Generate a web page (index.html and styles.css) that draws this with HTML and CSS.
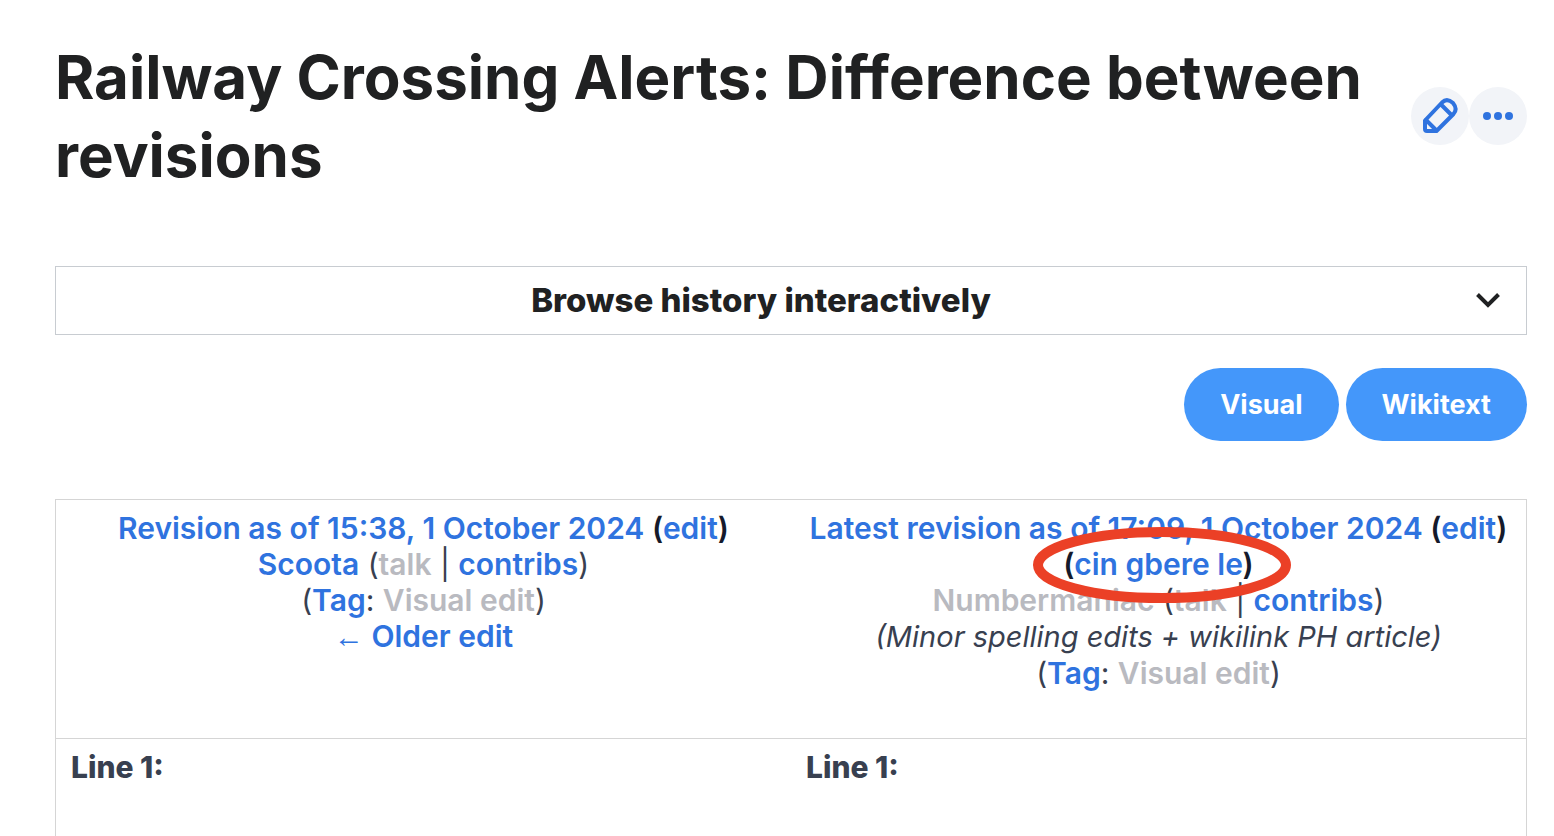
FILE: index.html
```html
<!DOCTYPE html>
<html lang="en">
<head>
<meta charset="utf-8">
<meta name="viewport" content="width=device-width, initial-scale=1">
<title>Railway Crossing Alerts: Difference between revisions</title>
<link rel="stylesheet" href="styles.css">
</head>
<body>
<main class="page">
  <header class="page-header">
    <h1 class="title">Railway Crossing Alerts: Difference between revisions</h1>
    <div class="actions">
      <button class="round" type="button" aria-label="Edit">
        <svg width="36" height="36" viewBox="0 0 36 36" fill="none" stroke="currentColor" stroke-width="4" stroke-linejoin="round" stroke-linecap="round" aria-hidden="true">
          <path d="M3 22.500 20 4.500Q25 -.5 31 5Q36 11 31.500 16L14.500 33H5Q3 33 3 31Z"/>
          <path d="M19 6.500 29.500 17M4 22 14 32"/>
        </svg>
      </button>
      <button class="round" type="button" aria-label="More">
        <svg width="32" height="10" viewBox="0 0 32 10" fill="currentColor" aria-hidden="true">
          <circle cx="5" cy="5" r="4"/><circle cx="16" cy="5" r="4"/><circle cx="27" cy="5" r="4"/>
        </svg>
      </button>
    </div>
  </header>

  <button class="history" type="button" aria-expanded="false">
    <span class="history-label">Browse history interactively</span>
    <svg width="24" height="16" viewBox="0 0 24 16" fill="none" stroke="currentColor" stroke-width="4" aria-hidden="true"><path d="M1.500 1.500 12 12 22.500 1.500"/></svg>
  </button>

  <div class="modes">
    <button class="mode" type="button">Visual</button>
    <button class="mode" type="button">Wikitext</button>
  </div>

  <table class="diff">
    <tbody>
      <tr class="revisions">
        <td>
          <div class="strong"><a href="#old">Revision as of 15:38, 1 October 2024</a> (<a href="#edit-old">edit</a>)</div>
          <div><a href="#scoota">Scoota</a> (<a class="missing" href="#talk-old">talk</a> | <a href="#contribs-old">contribs</a>)</div>
          <div>(<a href="#tag-old">Tag</a>: <span class="missing">Visual edit</span>)</div>
          <div><a href="#older"><span class="arrow">←</span> Older edit</a></div>
        </td>
        <td>
          <div class="strong"><a href="#latest">Latest revision as of 17:09, 1 October 2024</a> (<a href="#edit-latest">edit</a>)</div>
          <div class="strong"><span class="marked">(<a href="#undo">cin gbere le</a>)<svg class="ring" width="270" height="78" viewBox="0 0 270 78" fill="none" aria-hidden="true"><ellipse cx="138" cy="40" rx="124" ry="33" stroke="#eb4026" stroke-width="10"/></svg></span></div>
          <div><a class="missing" href="#numbermaniac">Numbermaniac</a> (<a class="missing" href="#talk-latest">talk</a> | <a href="#contribs-latest">contribs</a>)</div>
          <div><em class="summary">(Minor spelling edits + wikilink PH article)</em></div>
          <div>(<a href="#tag-latest">Tag</a>: <span class="missing">Visual edit</span>)</div>
        </td>
      </tr>
      <tr class="lines">
        <td>Line 1:</td>
        <td>Line 1:</td>
      </tr>
    </tbody>
  </table>
</main>
</body>
</html>
```
FILE: styles.css
```css
* { box-sizing: border-box; }
body {
  margin: 0;
  background: #fff;
  color: #384050;
  font: 400 30px/36px Inter, "Open Sans", sans-serif;
}
button { font: inherit; border: 0; cursor: pointer; }
a { color: #2f73df; font-weight: 600; text-decoration: none; }
.page { padding: 38px 27px 0 55px; }

.page-header {
  display: flex;
  align-items: center;
  justify-content: space-between;
  margin-bottom: 72px;
}
.title {
  margin: 0;
  color: #202122;
  font-size: 60px;
  font-weight: 700;
  line-height: 78px;
}
.actions { display: flex; flex: none; }
.round {
  display: grid;
  place-items: center;
  width: 58px;
  height: 58px;
  padding: 0;
  border-radius: 50%;
  background: #f2f4f8;
  color: #2f73df;
}

.history {
  display: flex;
  align-items: center;
  width: 100%;
  padding: 16px 26px 16px 0;
  border: 1px solid #c8ccd1;
  background: #fff;
  color: #202122;
}
.history-label {
  flex: 1;
  padding-right: 10px;
  font-size: 33px;
  font-weight: 800;
  line-height: 35px;
}

.modes {
  display: flex;
  justify-content: flex-end;
  gap: 7px;
  margin: 33px 0 58px;
}
.mode {
  padding: 18px 36px;
  border-radius: 37px;
  background: #4497fa;
  color: #fff;
  font-size: 27px;
  font-weight: 700;
  line-height: 37px;
}

.diff {
  width: 100%;
  table-layout: fixed;
  border-collapse: collapse;
  border: 1px solid #d5d5d5;
}
.diff td { padding: 10px 15px; vertical-align: top; }
.revisions { border-bottom: 1px solid #d5d5d5; }
.diff .revisions td { padding: 10px 0 47px; text-align: center; }
.strong { color: #151a2b; font-weight: 600; }
.missing { color: #b9bac0; font-weight: 600; }
.summary { font-size: 29px; }
.arrow { font-family: "Liberation Sans", sans-serif; font-weight: 400; }
.lines td { height: 136px; font-weight: 800; }
.marked { position: relative; }
.ring { position: absolute; top: 50%; left: 50%; transform: translate(-50%, -50%); }
```
